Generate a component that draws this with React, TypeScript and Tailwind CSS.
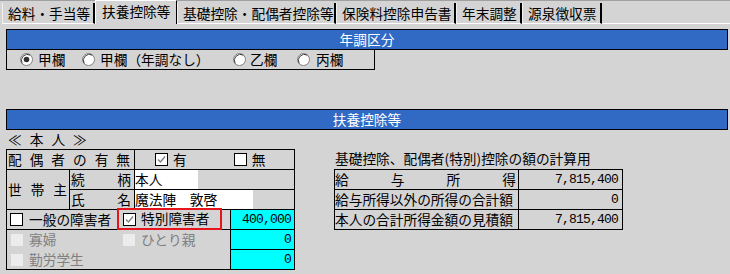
import React from "react";

const CJK = "font-['Noto_Sans_CJK_JP','Noto_Sans_CJK_SC',sans-serif]";
const MONO = "font-['Liberation_Mono','DejaVu_Sans_Mono',monospace] text-[13px] tracking-[-0.8px]";

function CheckBox({ checked = false, disabled = false }: { checked?: boolean; disabled?: boolean }) {
  if (disabled) {
    return <div className="w-[12px] h-[12px] bg-[#ececec] shrink-0" />;
  }
  return (
    <svg width="13" height="13" viewBox="0 0 13 13" className="shrink-0">
      <rect x="0.5" y="0.5" width="12" height="12" fill="#ffffff" stroke="#000000" />
      {checked && (
        <polyline points="3,6.5 5.5,9 10,3.5" fill="none" stroke="#808080" strokeWidth="1.4" />
      )}
    </svg>
  );
}

function Radio({ checked = false }: { checked?: boolean }) {
  return (
    <svg width="13" height="13" viewBox="0 0 13 13" className="shrink-0">
      <circle cx="6.5" cy="6.5" r="6" fill="#ffffff" stroke="#808080" />
      <path d="M2.2 10.4 A6 6 0 0 1 10.4 2.2" fill="none" stroke="#404040" strokeWidth="1" />
      {checked && <circle cx="6.5" cy="6.5" r="2.8" fill="#303030" />}
    </svg>
  );
}

function Spread({ chars, className = "" }: { chars: string[]; className?: string }) {
  return (
    <div className={"flex justify-between items-center " + className}>
      {chars.map((c, i) => (
        <span key={i}>{c}</span>
      ))}
    </div>
  );
}

function Tab({ label, w, selected = false }: { label: string; w: string; selected?: boolean }) {
  if (selected) {
    return (
      <div
        className={
          w +
          " h-[24px] -mt-px bg-[#d4d4d4] border-l border-t border-white border-r border-r-black flex items-start pt-[4px] pl-[6px] whitespace-nowrap"
        }
      >
        {label}
      </div>
    );
  }
  return (
    <div
      className={
        w +
        " h-[21px] mt-[2px] border-l border-l-[#f0f0f0] border-r-2 border-r-black border-b border-b-white flex items-start pt-[4px] pl-[5px] whitespace-nowrap overflow-hidden"
      }
    >
      {label}
    </div>
  );
}

export default function App() {
  return (
    <div className={"w-[730px] h-[274px] bg-[#d4d4d4] overflow-hidden text-[13.7px] leading-none text-black " + CJK}>
      {/* Tabs */}
      <div className="flex h-[24px] border-t border-[#a0a0a0] pl-[2px]">
        <Tab label="給料・手当等" w="w-[93px]" />
        <Tab label="扶養控除等" w="w-[82px]" selected />
        <Tab label="基礎控除・配偶者控除等" w="w-[159px]" />
        <Tab label="保険料控除申告書" w="w-[120px]" />
        <Tab label="年末調整" w="w-[66px]" />
        <Tab label="源泉徴収票" w="w-[80px]" />
        <div className="flex-1 h-[21px] mt-[2px] border-b border-white" />
      </div>

      <div className="pl-[6px] pt-[5px]">
        {/* 年調区分 */}
        <div className="w-[722px] h-[21px] border border-black bg-[#316ac5] text-white flex items-center justify-center">
          年調区分
        </div>
        <div className="w-[369px] h-[20px] border-x border-b border-black flex items-center pl-[13px]">
          <div className="w-[62px] flex items-center gap-[5px]">
            <Radio checked />
            <span>甲欄</span>
          </div>
          <div className="w-[151px] flex items-center gap-[5px]">
            <Radio />
            <span>甲欄（年調なし）</span>
          </div>
          <div className="w-[64px] flex items-center gap-[4px]">
            <Radio />
            <span>乙欄</span>
          </div>
          <div className="flex items-center gap-[6px]">
            <Radio />
            <span>丙欄</span>
          </div>
        </div>

        {/* 扶養控除等 */}
        <div className="mt-[39px] w-[722px] h-[21px] border border-black bg-[#316ac5] text-white flex items-center justify-center">
          扶養控除等
        </div>

        <div className="h-[19px] flex items-center gap-[8px] pl-[2px]">
          <span>≪</span>
          <span>本</span>
          <span>人</span>
          <span>≫</span>
        </div>

        <div className="flex items-start">
          {/* Left table */}
          <div className="w-[289px] border border-black">
            {/* Row 1 */}
            <div className="h-[20px] flex border-b border-black">
              <Spread chars={["配", "偶", "者", "の", "有", "無"]} className="w-[128px] border-r border-black pl-[1px] pr-[4px]" />
              <div className="flex items-center pl-[20px]">
                <CheckBox checked />
                <span className="ml-[5px]">有</span>
                <div className="ml-[47px] flex items-center">
                  <CheckBox />
                  <span className="ml-[5px]">無</span>
                </div>
              </div>
            </div>
            {/* Rows 2-3 */}
            <div className="flex border-b border-black">
              <Spread chars={["世", "帯", "主"]} className="w-[63px] border-r border-black pl-[1px] pr-[2px]" />
              <div className="flex-1">
                <div className="h-[20px] flex border-b border-black">
                  <Spread chars={["続", "柄"]} className="w-[65px] border-r border-black pl-[1px] pr-[3px]" />
                  <div className="w-[63px] bg-white flex items-center">本人</div>
                </div>
                <div className="h-[19px] flex">
                  <Spread chars={["氏", "名"]} className="w-[65px] border-r border-black pl-[1px] pr-[3px]" />
                  <div className="w-[118px] bg-white flex items-center">魔法陣　敦啓</div>
                </div>
              </div>
            </div>
            {/* Row 4 */}
            <div className="h-[20px] flex items-start border-b border-black">
              <div className="w-[110px] h-[19px] flex items-center pl-[3px]">
                <CheckBox />
                <span className="ml-[6px]">一般の障害者</span>
              </div>
              <div className="w-[105px] h-[22px] -mt-[2px] border-2 border-[#e8141c] flex items-center pl-[4px]">
                <CheckBox checked />
                <span className="ml-[5px]">特別障害者</span>
              </div>
              <div className="flex-1" />
              <div className={"w-[64px] h-[19px] border-l border-black bg-[#00ffff] flex items-center justify-end pr-[3px] " + MONO}>
                400,000
              </div>
            </div>
            {/* Row 5 */}
            <div className="h-[20px] flex items-start text-[#808080]">
              <div className="w-[110px] h-[19px] flex items-center pl-[4px]">
                <CheckBox disabled />
                <span className="ml-[6px]">寡婦</span>
              </div>
              <div className="w-[105px] h-[19px] flex items-center pl-[6px]">
                <CheckBox disabled />
                <span className="ml-[6px]">ひとり親</span>
              </div>
              <div className="flex-1" />
              <div className={"w-[64px] h-[20px] border-l border-b border-black bg-[#00ffff] text-black flex items-center justify-end pr-[3px] " + MONO}>
                0
              </div>
            </div>
            {/* Row 6 */}
            <div className="h-[19px] flex items-start text-[#808080]">
              <div className="w-[110px] h-[19px] flex items-center pl-[4px]">
                <CheckBox disabled />
                <span className="ml-[6px]">勤労学生</span>
              </div>
              <div className="flex-1" />
              <div className={"w-[64px] h-[19px] border-l border-black bg-[#00ffff] text-black flex items-center justify-end pr-[3px] " + MONO}>
                0
              </div>
            </div>
          </div>

          {/* Right section */}
          <div className="ml-[39px] w-[289px]">
            <div className="h-[20px] flex items-center pl-[1px]">基礎控除、配偶者(特別)控除の額の計算用</div>
            <div className="border border-black">
              <div className="h-[20px] flex border-b border-black">
                <Spread chars={["給", "与", "所", "得"]} className="w-[184px] border-r border-black pl-[0px] pr-[2px]" />
                <div className={"flex-1 flex items-center justify-end pr-[4px] " + MONO}>7,815,400</div>
              </div>
              <div className="h-[20px] flex border-b border-black">
                <div className="w-[184px] border-r border-black flex items-center">給与所得以外の所得の合計額</div>
                <div className={"flex-1 flex items-center justify-end pr-[4px] " + MONO}>0</div>
              </div>
              <div className="h-[19px] flex">
                <div className="w-[184px] border-r border-black flex items-center">本人の合計所得金額の見積額</div>
                <div className={"flex-1 flex items-center justify-end pr-[4px] " + MONO}>7,815,400</div>
              </div>
            </div>
          </div>
        </div>
      </div>
    </div>
  );
}
